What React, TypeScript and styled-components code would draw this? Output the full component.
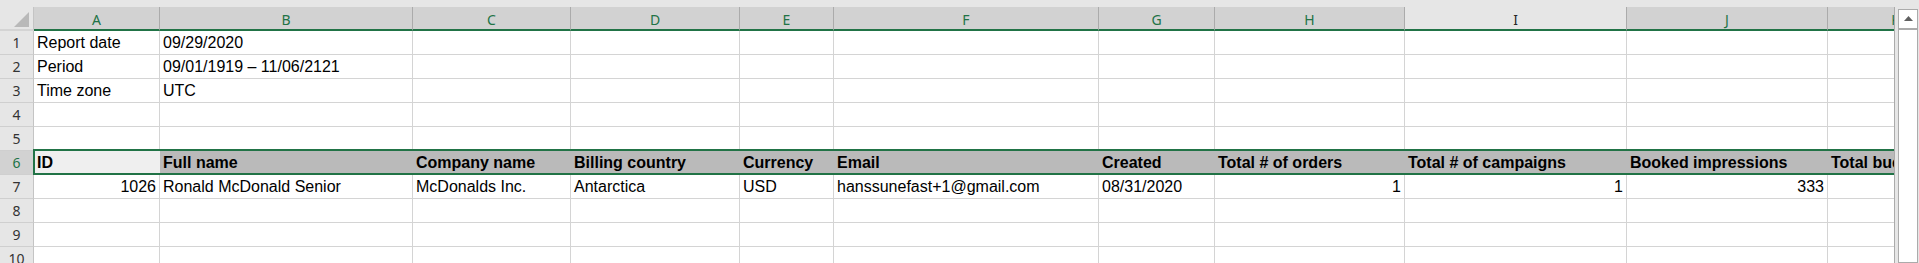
import React from 'react';
import styled, { createGlobalStyle } from 'styled-components';

const GREEN = '#217346';

const Global = createGlobalStyle`
  html, body { margin: 0; padding: 0; background: #e6e6e6; }
  body { width: 1919px; height: 263px; overflow: hidden; }
`;

const Window = styled.div`
  display: flex;
  align-items: flex-start;
  width: 1919px;
  height: 263px;
  background: #e6e6e6;
  overflow: hidden;
`;

const Sheet = styled.div`
  margin-top: 7px;
  width: 1894px;
  height: 256px;
  flex-shrink: 0;
  border-right: 1px solid #ababab;
  display: flex;
  flex-direction: column;
  overflow: hidden;
`;

const HeaderRow = styled.div`
  display: flex;
  flex-shrink: 0;
  height: 24px;
`;

const Corner = styled.div`
  width: 34px;
  height: 24px;
  box-sizing: border-box;
  flex-shrink: 0;
  border-right: 1px solid #c4c4c4;
  border-bottom: 2px solid #d4d4d4;
  display: flex;
  align-items: flex-end;
  justify-content: flex-end;
  padding: 0 4px 2px 0;
`;

const ColHeader = styled.div<{ $w: number; $sel: boolean }>`
  width: ${(p) => p.$w}px;
  height: 24px;
  box-sizing: border-box;
  flex-shrink: 0;
  background: ${(p) => (p.$sel ? '#d2d2d2' : '#e6e6e6')};
  color: ${(p) => (p.$sel ? GREEN : '#262626')};
  border-right: 1px solid #ababab;
  border-bottom: 2px solid ${GREEN};
  text-align: center;
  font-family: 'Noto Sans', 'Open Sans', sans-serif;
  font-size: 14px;
  line-height: 25px;
  overflow: hidden;
  white-space: nowrap;
`;

const Row = styled.div`
  display: flex;
  flex-shrink: 0;
  height: 24px;
`;

const RowHeader = styled.div<{ $sel: boolean }>`
  width: 34px;
  height: 24px;
  box-sizing: border-box;
  flex-shrink: 0;
  background: ${(p) => (p.$sel ? '#d2d2d2' : '#e6e6e6')};
  color: ${(p) => (p.$sel ? GREEN : '#333333')};
  border-right: 1px solid #c4c4c4;
  border-bottom: 1px solid #cfcfcf;
  text-align: center;
  font-family: 'Noto Sans', 'Open Sans', sans-serif;
  font-size: 14px;
  line-height: 24px;
  overflow: hidden;
`;

const DataArea = styled.div`
  position: relative;
  display: flex;
  flex-shrink: 0;
`;

const Cell = styled.div<{ $w: number; $fill?: string; $bold?: boolean; $right?: boolean }>`
  width: ${(p) => p.$w}px;
  height: 24px;
  box-sizing: border-box;
  flex-shrink: 0;
  padding: 0 3px;
  background: ${(p) => p.$fill || '#ffffff'};
  border-right: 1px solid ${(p) => (p.$fill ? 'transparent' : '#d4d4d4')};
  border-bottom: 1px solid #d4d4d4;
  font-family: 'Liberation Sans', Arial, sans-serif;
  font-size: 16px;
  font-weight: ${(p) => (p.$bold ? 700 : 400)};
  line-height: 24px;
  color: #000;
  text-align: ${(p) => (p.$right ? 'right' : 'left')};
  white-space: nowrap;
  overflow: hidden;
`;

const Selection = styled.div`
  position: absolute;
  top: -2px;
  left: -1px;
  right: -10px;
  bottom: 0;
  border: 2px solid ${GREEN};
  pointer-events: none;
`;

const VScroll = styled.div`
  margin: 9px 0 0 3px;
  width: 20px;
  height: 254px;
  flex-shrink: 0;
  display: flex;
  flex-direction: column;
`;

const ScrollButton = styled.div`
  height: 20px;
  box-sizing: border-box;
  border: 1px solid #ababab;
  background: #fff;
  display: flex;
  align-items: center;
  justify-content: center;
  padding-bottom: 2px;
`;

const ScrollThumb = styled.div`
  flex: 1;
  border: 1px solid #ababab;
  background: #fff;
`;

type Col = { key: string; w: number; sel: boolean };

const columns: Col[] = [
  { key: 'A', w: 126, sel: true },
  { key: 'B', w: 253, sel: true },
  { key: 'C', w: 158, sel: true },
  { key: 'D', w: 169, sel: true },
  { key: 'E', w: 94, sel: true },
  { key: 'F', w: 265, sel: true },
  { key: 'G', w: 116, sel: true },
  { key: 'H', w: 190, sel: true },
  { key: 'I', w: 222, sel: false },
  { key: 'J', w: 201, sel: true },
  { key: 'K', w: 136, sel: true },
];

type CellData = { t: string; right?: boolean };

const rows: { n: number; cells: CellData[]; header?: boolean }[] = [
  { n: 1, cells: [{ t: 'Report date' }, { t: '09/29/2020' }] },
  { n: 2, cells: [{ t: 'Period' }, { t: '09/01/1919 – 11/06/2121' }] },
  { n: 3, cells: [{ t: 'Time zone' }, { t: 'UTC' }] },
  { n: 4, cells: [] },
  { n: 5, cells: [] },
  {
    n: 6,
    header: true,
    cells: [
      { t: 'ID' },
      { t: 'Full name' },
      { t: 'Company name' },
      { t: 'Billing country' },
      { t: 'Currency' },
      { t: 'Email' },
      { t: 'Created' },
      { t: 'Total # of orders' },
      { t: 'Total # of campaigns' },
      { t: 'Booked impressions' },
      { t: 'Total budget' },
    ],
  },
  {
    n: 7,
    cells: [
      { t: '1026', right: true },
      { t: 'Ronald McDonald Senior' },
      { t: 'McDonalds Inc.' },
      { t: 'Antarctica' },
      { t: 'USD' },
      { t: 'hanssunefast+1@gmail.com' },
      { t: '08/31/2020' },
      { t: '1', right: true },
      { t: '1', right: true },
      { t: '333', right: true },
      { t: '' },
    ],
  },
  { n: 8, cells: [] },
  { n: 9, cells: [] },
  { n: 10, cells: [] },
];

const CornerTriangle = () => (
  <svg width="15" height="15" viewBox="0 0 15 15">
    <polygon points="15,0 15,15 0,15" fill="#b9b9b9" />
  </svg>
);

const UpArrow = () => (
  <svg width="9" height="5" viewBox="0 0 9 5">
    <polygon points="0,5 4.5,0 9,5" fill="#606060" />
  </svg>
);

export default function App() {
  return (
    <>
      <Global />
      <Window>
        <Sheet>
          <HeaderRow>
            <Corner>
              <CornerTriangle />
            </Corner>
            {columns.map((c) => (
              <ColHeader key={c.key} $w={c.w} $sel={c.sel}>
                {c.key}
              </ColHeader>
            ))}
          </HeaderRow>
          {rows.map((r) => (
            <Row key={r.n}>
              <RowHeader $sel={!!r.header}>{r.n}</RowHeader>
              <DataArea>
                {columns.map((c, i) => {
                  const d = r.cells[i];
                  const fill = r.header ? (i === 0 ? '#efefef' : '#bababa') : undefined;
                  return (
                    <Cell key={c.key} $w={c.w} $fill={fill} $bold={r.header} $right={d?.right}>
                      {d?.t}
                    </Cell>
                  );
                })}
                {r.header && <Selection />}
              </DataArea>
            </Row>
          ))}
        </Sheet>
        <VScroll>
          <ScrollButton>
            <UpArrow />
          </ScrollButton>
          <ScrollThumb />
        </VScroll>
      </Window>
    </>
  );
}
